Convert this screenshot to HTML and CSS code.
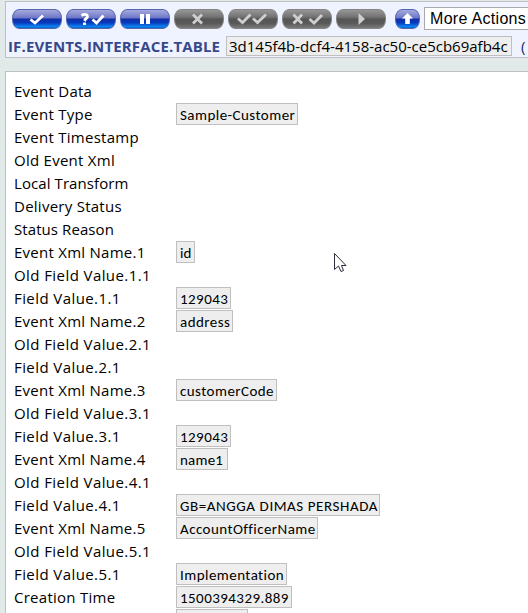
FILE: index.html
```
<!DOCTYPE html>
<html lang="en">
<head>
<meta charset="utf-8">
<title>IF.EVENTS.INTERFACE.TABLE</title>
<link rel="stylesheet" href="styles.css">
</head>
<body>
<header class="head">
  <div class="toolbar">
    <button class="btn"><svg viewBox="0 0 50 20"><path class="line" d="M18.500 10.500L23 14L31 6.500"/></svg></button>
    <button class="btn"><svg viewBox="0 0 50 20"><path class="line" d="M15.500 6.500Q18.500 4.500 21 6Q22.500 8 19.500 10L18.500 12M26.500 10.500L30.500 14L37.500 6.500"/><path class="fill" d="M17 13.500h3v2.500h-3z"/></svg></button>
    <button class="btn"><svg viewBox="0 0 50 20"><path class="fill" d="M20 5h4v10h-4zM26 5h4v10h-4z"/></svg></button>
    <button class="btn off"><svg viewBox="0 0 50 20"><path class="line" d="M19 5.500L28 14.500M28 5.500L19 14.500"/></svg></button>
    <button class="btn off"><svg viewBox="0 0 50 20"><path class="line" d="M10 9.500L14.500 13.500L22.500 5.500M25 9.500L29.500 13.500L38 5.500"/></svg></button>
    <button class="btn off"><svg viewBox="0 0 50 20"><path class="line" d="M11.500 5.500L20 14.500M20 5.500L11.500 14.500M27.500 10L32 14L40 6"/></svg></button>
    <button class="btn off"><svg viewBox="0 0 50 20"><path class="fill" d="M22.500 4L29 10L22.500 16z"/></svg></button>
    <button class="btn up"><svg viewBox="0 0 25 20"><path class="fill" d="M12.500 4L18 9.500H14.800V15H10.200V9.500H7z"/></svg></button>
    <div class="select">More Actions</div>
  </div>
  <div class="record">
    <span class="title">IF.EVENTS.INTERFACE.TABLE</span>
    <span class="key">3d145f4b-dcf4-4158-ac50-ce5cb69afb4c</span>
    <span class="note">(</span>
  </div>
</header>
<main class="panel">
  <div class="row"><span class="label">Event Data</span></div>
  <div class="row"><span class="label">Event Type</span><span class="value type">Sample-Customer</span></div>
  <div class="row"><span class="label">Event Timestamp</span></div>
  <div class="row"><span class="label">Old Event Xml</span></div>
  <div class="row"><span class="label snug">Local Transform</span></div>
  <div class="row"><span class="label">Delivery Status</span></div>
  <div class="row"><span class="label snug">Status Reason</span></div>
  <div class="row"><span class="label">Event Xml Name.1</span><span class="value id">id</span></div>
  <div class="row"><span class="label wide">Old Field Value.1.1</span></div>
  <div class="row"><span class="label wide">Field Value.1.1</span><span class="value number">129043</span></div>
  <div class="row"><span class="label">Event Xml Name.2</span><span class="value address">address</span></div>
  <div class="row"><span class="label wide">Old Field Value.2.1</span></div>
  <div class="row"><span class="label wide">Field Value.2.1</span></div>
  <div class="row"><span class="label">Event Xml Name.3</span><span class="value code">customerCode</span></div>
  <div class="row"><span class="label wide">Old Field Value.3.1</span></div>
  <div class="row"><span class="label wide">Field Value.3.1</span><span class="value number">129043</span></div>
  <div class="row"><span class="label">Event Xml Name.4</span><span class="value name">name1</span></div>
  <div class="row"><span class="label wide">Old Field Value.4.1</span></div>
  <div class="row"><span class="label wide">Field Value.4.1</span><span class="value person">GB=ANGGA DIMAS PERSHADA</span></div>
  <div class="row"><span class="label">Event Xml Name.5</span><span class="value officer">AccountOfficerName</span></div>
  <div class="row"><span class="label wide">Old Field Value.5.1</span></div>
  <div class="row"><span class="label wide">Field Value.5.1</span><span class="value impl">Implementation</span></div>
  <div class="row"><span class="label">Creation Time</span><span class="value time">1500394329.889</span></div>
  <div class="row last-row"><span class="label"></span><span class="value last"></span></div>
</main>
<svg class="pointer" viewBox="0 0 13 20"><path d="M.5.5V16.500L4.500 13L7 18.500L9.500 17.500L7.500 12.500H12z"/></svg>
</body>
</html>
```
FILE: styles.css
```
* { box-sizing: border-box; }
body {
  margin: 0;
  padding: 1px 0 0 5px;
  height: 613px;
  overflow: hidden;
  background: #e1eae8;
  font-family: "Trebuchet MS", "Open Sans", sans-serif;
  color: #000;
}
.head {
  height: 57px;
  border: 1px solid #bfbfbf;
  border-right: 0;
  background: #eff3ff;
}
.toolbar {
  display: flex;
  align-items: center;
  gap: 4px;
  height: 23px;
  margin: 5px 0 0 6px;
}
.btn {
  flex: none;
  width: 50px;
  height: 20px;
  padding: 0;
  border: 1px solid #5366ae;
  border-radius: 7px / 9px;
  background: linear-gradient(#a5a9dc 0, #7079c8 42%, #1230a8 52%, #0838bc 70%, #0a83f0 92%, #0864cc 100%);
  overflow: hidden;
}
.btn svg { display: block; width: 50px; height: 20px; margin: -1px; }
.btn .line { fill: none; stroke: #fff; stroke-width: 2.8; }
.btn .fill { fill: #fff; }
.btn.off {
  border-color: #858585;
  background: linear-gradient(#969696 0, #737373 38%, #555 52%, #5a5a5a 75%, #7b7b7b 100%);
}
.off .line { stroke: #cfcfcf; }
.off .fill { fill: #cfcfcf; }
.btn.up { width: 25px; margin-left: 5px; }
.up svg { width: 25px; }
.select {
  flex: 1;
  height: 23px;
  padding-left: 5px;
  border: 1px solid #a9a9a9;
  border-right: 0;
  background: #fff;
  font: 16px/21px "Liberation Sans", Arial, sans-serif;
  letter-spacing: .3px;
  white-space: nowrap;
}
.record {
  display: flex;
  align-items: center;
  height: 20px;
  margin-top: 6px;
  padding-left: 2px;
  white-space: nowrap;
}
.title {
  width: 218px;
  color: #36488a;
  font-size: 15px;
  font-weight: 700;
  letter-spacing: .15px;
}
.key {
  width: 286px;
  height: 20px;
  padding-left: 2px;
  border: 1px solid #bfbfbf;
  background: #eee;
  font-size: 15px;
  line-height: 19px;
}
.note { margin-left: 9px; color: #202a60; font-size: 15px; }
.panel {
  height: 542px;
  margin-top: 13px;
  padding: 8px 8px 0;
  border: 1px solid #bfbfbf;
  border-width: 1px 0 0 1px;
  background: #fff;
  overflow: hidden;
}
.row { display: flex; height: 23px; white-space: nowrap; }
.label { width: 162px; font-size: 15px; line-height: 23px; letter-spacing: .26px; }
.label.snug { letter-spacing: .08px; }
.label.wide { letter-spacing: .42px; }
.value {
  height: 22px;
  padding-left: 3px;
  border: 1px solid #bfbfbf;
  background: #eee;
  font: 15px/22px Calibri, Carlito, Lato, sans-serif;
  letter-spacing: .45px;
}
.type { width: 122px; }
.id { width: 19px; letter-spacing: 0; }
.number { width: 55px; }
.address { width: 57px; }
.code { width: 101px; }
.name { width: 52px; letter-spacing: .2px; }
.person { width: 204px; letter-spacing: .57px; }
.officer { width: 142px; }
.impl { width: 111px; }
.time { width: 116px; }
.last { width: 72px; }
.last-row { height: 4px; }
.last-row .value { height: 4px; border-bottom: 0; }
.pointer { position: absolute; left: 334px; top: 253px; width: 13px; height: 20px; }
.pointer path { fill: #fff; stroke: #2b2b3a; stroke-width: 1; }
```
